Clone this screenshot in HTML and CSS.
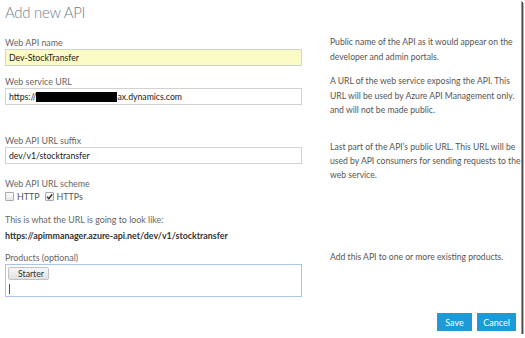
FILE: index.html
```html
<!DOCTYPE html>
<html>
<head>
<meta charset="utf-8">
<link rel="stylesheet" href="styles.css">
</head>
<body>
<div class="frame">
  <h1 class="title">Add new API</h1>

  <div class="row row-name">
    <div class="field">
      <div class="label">Web API name</div>
      <div class="input input-hl">Dev-StockTransfer</div>
    </div>
    <p class="desc">Public name of the API as it would appear on the<br>developer and admin portals.</p>
  </div>

  <div class="row row-url">
    <div class="field">
      <div class="label">Web service URL</div>
      <div class="input">https://<span class="redact"></span>ax.dynamics.com</div>
    </div>
    <p class="desc">A URL of the web service exposing the API. This<br>URL will be used by Azure API Management only.<br>and will not be made public.</p>
  </div>

  <div class="row row-suffix">
    <div class="field">
      <div class="label">Web API URL suffix</div>
      <div class="input">dev/v1/stocktransfer</div>
      <div class="label label-scheme">Web API URL scheme</div>
      <div class="checks">
        <span class="cb"></span><span class="cb-text">HTTP</span>
        <span class="cb cb-on"><svg viewBox="0 0 9 9" width="9" height="9"><path d="M2 4.6 L3.8 6.6 L7.2 2.2" fill="none" stroke="#333" stroke-width="1.4"/></svg></span><span class="cb-text">HTTPs</span>
      </div>
      <div class="note">This is what the URL is going to look like:</div>
      <div class="preview">https://apimmanager.azure-api.net/dev/v1/stocktransfer</div>
    </div>
    <p class="desc">Last part of the API’s public URL. This URL will be<br>used by API consumers for sending requests to the<br>web service.</p>
  </div>

  <div class="row row-products">
    <div class="field">
      <div class="label">Products (optional)</div>
      <div class="tagbox">
        <span class="tag">Starter</span>
        <span class="caret"></span>
      </div>
    </div>
    <p class="desc">Add this API to one or more existing products.</p>
  </div>

  <div class="actions">
    <button class="btn btn-save">Save</button>
    <button class="btn btn-cancel">Cancel</button>
  </div>
</div>
</body>
</html>
```

FILE: styles.css
```css
html, body {
  margin: 0;
  padding: 0;
  background: #fff;
}
body {
  font-family: "Segoe UI", Lato, "Open Sans", sans-serif;
  color: #444;
}
.frame {
  width: 511px;
  height: 334px;
  padding: 0 5px;
  background: #fff;
  box-shadow: 1px 1px 0 #9a9a9a, 2px 2px 0 #4a4a4a, 3px 3px 0 #b5b5b5;
  display: flex;
  flex-direction: column;
}
.title {
  margin: 0;
  font-size: 15px;
  line-height: 24px;
  font-weight: 300;
  letter-spacing: -0.3px;
  color: #6f7d8b;
}
.row {
  display: grid;
  grid-template-columns: 297px 1fr;
  column-gap: 28px;
}
.row-name { margin-top: 13px; }
.row-url { margin-top: 10px; }
.row-suffix { margin-top: 17px; }
.row-products { margin-top: 10px; }
.label {
  font-size: 8.9px;
  line-height: 12px;
  color: #666;
}
.input {
  box-sizing: border-box;
  height: 17px;
  border: 1px solid #d2d2d2;
  padding: 0 3px;
  font-size: 8.7px;
  line-height: 15px;
  color: #222;
  display: flex;
  align-items: center;
  white-space: nowrap;
}
.input-hl {
  background: #fbfbc6;
}
.redact {
  display: inline-block;
  width: 81px;
  height: 10px;
  background: #000;
}
.label-scheme { margin-top: 14px; }
.checks {
  margin-top: 1px;
  display: flex;
  align-items: center;
  height: 12px;
  font-size: 8.9px;
  color: #555;
}
.cb {
  box-sizing: border-box;
  width: 9px;
  height: 9px;
  border: 1px solid #aaa;
  border-radius: 1px;
  background: linear-gradient(#fff, #e6e6e6);
  display: inline-flex;
}
.cb svg { margin: -1px; }
.cb-text { margin: 0 5px 0 3px; }
.note {
  margin-top: 11px;
  font-size: 8.9px;
  line-height: 12px;
  color: #666;
}
.preview {
  margin-top: 4px;
  font-size: 8.9px;
  line-height: 12px;
  font-weight: 700;
  color: #333;
}
.desc {
  margin: -2px 0 0;
  font-size: 8.6px;
  line-height: 14.5px;
  color: #555;
  white-space: nowrap;
}
.row-suffix .desc { margin-top: 5px; line-height: 14px; }
.tagbox {
  box-sizing: border-box;
  height: 33px;
  border: 1px solid #a9c6e8;
  padding: 2px 2px;
  display: flex;
  flex-direction: column;
  align-items: flex-start;
}
.tag {
  box-sizing: border-box;
  height: 13px;
  padding: 0 4px 0 9px;
  border: 1px solid #c2c2c2;
  border-radius: 2px;
  background: linear-gradient(#f7f7f7, #e2e2e2);
  font-size: 8.7px;
  line-height: 11px;
  color: #333;
}
.caret {
  margin: 4px 0 0 1px;
  width: 1px;
  height: 10px;
  background: #555;
}
.actions {
  margin-top: auto;
  margin-bottom: 3px;
  display: flex;
  justify-content: flex-end;
  gap: 5px;
}
.btn {
  height: 18px;
  border: 0;
  padding: 0;
  background: #1e9ad6;
  color: #fff;
  font-family: inherit;
  font-size: 9px;
}
.btn-save { width: 35px; }
.btn-cancel { width: 39px; }
```
